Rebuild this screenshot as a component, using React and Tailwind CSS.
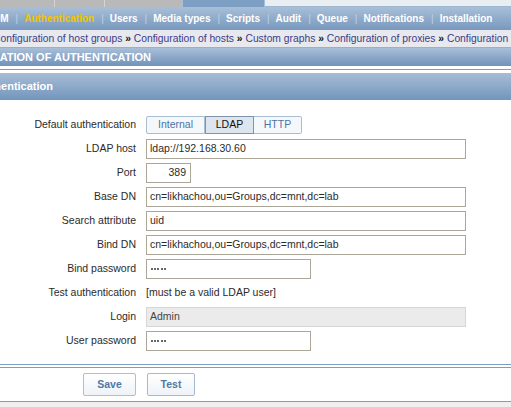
import React from "react";

const navItems = ["DM", "Authentication", "Users", "Media types", "Scripts", "Audit", "Queue", "Notifications", "Installation"];
const crumbs = ["Configuration of host groups", "Configuration of hosts", "Custom graphs", "Configuration of proxies", "Configuration of discovery"];

function Field({ label, children }) {
  return (
    <div className="flex h-[20px] items-center">
      <div className="w-[136px] text-right text-[10.5px] text-[#2b2b2b] whitespace-nowrap">{label}</div>
      <div className="ml-[10px] flex h-full items-center">{children}</div>
    </div>
  );
}

function Box({ w, children, right, disabled }) {
  return (
    <div
      className={
        "flex h-[20px] items-center px-[3px] text-[10.5px] whitespace-nowrap border " +
        (disabled ? "bg-[#ebebeb] border-[#d6d6d6] text-[#444]" : "bg-white border-[#aba698] text-[#2b2b2b]") +
        (right ? " justify-end pr-[4px]" : " pl-[3px]")
      }
      style={{ width: w }}
    >
      {children}
    </div>
  );
}

function Dots() {
  return (
    <span className="flex gap-[1.2px] pl-[1px]">
      {[0, 1, 2, 3, 4].map((i) => (
        <span key={i} className="block h-[2px] w-[2px] rounded-full bg-[#333]" />
      ))}
    </span>
  );
}

export default function App() {
  return (
    <div className="w-[511px] h-[407px] overflow-hidden bg-white font-['Liberation_Sans',Arial,sans-serif]">
      {/* top tabs */}
      <div className="flex h-[7px] bg-[#b9b9b9]">
        <div className="w-[55px] border-r border-[#d4d4d4]" />
        <div className="w-[50px] border-r border-[#d4d4d4]" />
        <div className="w-[77px]" />
        <div className="w-[83px] bg-[#7e9fc4] border-x border-[#a9bfd7]" />
        <div className="flex-1 bg-[#e9eef3] border-b border-[#9fb6cf]" />
      </div>

      {/* main nav */}
      <div className="flex h-[23px] items-center whitespace-nowrap bg-gradient-to-b from-[#a8bfd8] to-[#7898bd] text-[10px] font-bold text-white">
        {navItems.map((n, i) => (
          <React.Fragment key={n}>
            {i > 0 && <span className="ml-[7px] mr-[6px] font-normal text-[#c0d1e4]">|</span>}
            <span className={(i === 0 ? "ml-[-7px] " : "") + (n === "Authentication" ? "text-[#f2c400]" : "")}>{n}</span>
          </React.Fragment>
        ))}
      </div>

      {/* breadcrumb */}
      <div className="flex h-[18px] items-center whitespace-nowrap border-b border-[#9bb0c8] bg-[#e7e9ee] text-[10.3px] text-[#3d3b85]">
        <span className="ml-[-7px]">
          {crumbs.map((c, i) => (
            <React.Fragment key={c}>
              {i > 0 && <span className="font-bold text-[#111]"> » </span>}
              {c}
            </React.Fragment>
          ))}
        </span>
      </div>

      {/* title */}
      <div className="flex h-[18px] items-center whitespace-nowrap bg-gradient-to-b from-[#a9bfd8] to-[#7092ba] text-[11px] font-bold text-white">
        <span className="ml-[-59px]">CONFIGURATION OF AUTHENTICATION</span>
      </div>
      <div className="mt-[3px] h-px bg-[#7f9dc0]" />

      {/* section header */}
      <div className="mt-[3px] flex h-[27px] items-center whitespace-nowrap bg-gradient-to-b from-[#a7bdd7] to-[#7395bc] text-[11px] font-bold text-white">
        <span className="ml-[-24px]">Authentication</span>
      </div>

      {/* form */}
      <div className="flex flex-col gap-[4px] pt-[15px]">
        <Field label="Default authentication">
          <div className="flex h-[18px] text-[10.5px]">
            <div className="flex w-[59px] items-center justify-center rounded-l-[2px] border border-[#a9bdd3] bg-[#f5f8fb] text-[#4a74a6]">Internal</div>
            <div className="flex w-[49px] items-center justify-center border border-[#7f93ab] bg-[#dde5ee] text-[#111]">LDAP</div>
            <div className="flex w-[48px] items-center justify-center rounded-r-[2px] border border-l-0 border-[#a9bdd3] bg-[#f5f8fb] text-[#4a74a6]">HTTP</div>
          </div>
        </Field>
        <Field label="LDAP host"><Box w={320}>ldap://192.168.30.60</Box></Field>
        <Field label="Port"><Box w={45} right>389</Box></Field>
        <Field label="Base DN"><Box w={320}>cn=likhachou,ou=Groups,dc=mnt,dc=lab</Box></Field>
        <Field label="Search attribute"><Box w={320}>uid</Box></Field>
        <Field label="Bind DN"><Box w={320}>cn=likhachou,ou=Groups,dc=mnt,dc=lab</Box></Field>
        <Field label="Bind password"><Box w={165}><Dots /></Box></Field>
        <Field label="Test authentication">
          <span className="text-[10.5px] text-[#2b2b2b] whitespace-nowrap">[must be a valid LDAP user]</span>
        </Field>
        <Field label="Login"><Box w={320} disabled>Admin</Box></Field>
        <Field label="User password"><Box w={165}><Dots /></Box></Field>
      </div>

      {/* footer */}
      <div className="mt-[13px] h-px bg-[#7f9dc0]" />
      <div className="mt-[2px] border-t border-b border-[#7f9dc0] bg-white">
        <div className="flex gap-[11px] pl-[83px] py-[5px]">
          <div className="flex h-[23px] w-[53px] items-center justify-center rounded-[2px] border border-[#f2b35e] bg-gradient-to-b from-[#ffffff] to-[#eef3f8] text-[10.5px] font-bold text-[#4f79a9]">Save</div>
          <div className="flex h-[23px] w-[48px] items-center justify-center rounded-[2px] border border-[#a6b9d0] bg-gradient-to-b from-[#ffffff] to-[#eef3f8] text-[10.5px] font-bold text-[#4f79a9]">Test</div>
        </div>
      </div>
      <div className="h-[20px] bg-[#efefef]" />
    </div>
  );
}
